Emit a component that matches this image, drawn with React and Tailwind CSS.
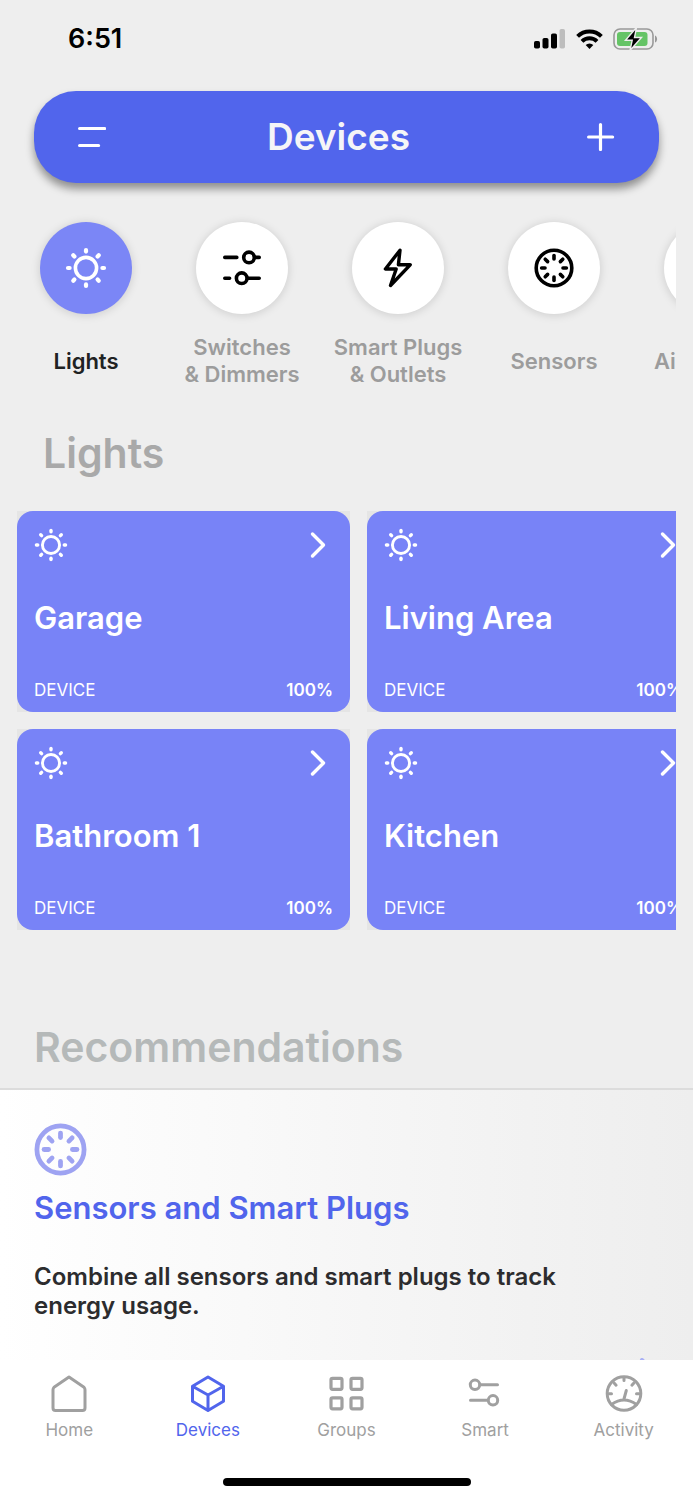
import clsx from "clsx";

const RAYS = [0, 45, 90, 135, 180, 225, 270, 315];

function SunIcon({ className }) {
  return (
    <svg viewBox="-1 -1 42 42" className={className} fill="none" stroke="currentColor" strokeLinecap="round" aria-hidden="true">
      <circle cx="20" cy="20" r="10.6" strokeWidth="3.6" />
      {RAYS.map((a) => (
        <path key={a} d="M20 2v1.6" strokeWidth="4.2" transform={`rotate(${a} 20 20)`} />
      ))}
    </svg>
  );
}

function SensorIcon({ className }) {
  return (
    <svg viewBox="0 0 40 40" className={className} fill="none" stroke="currentColor" strokeLinecap="round" aria-hidden="true">
      <circle cx="20" cy="20" r="17.8" strokeWidth="3.6" />
      {RAYS.map((a) => (
        <path key={a} d="M20 7.6v3.4" strokeWidth="3.6" transform={`rotate(${a} 20 20)`} />
      ))}
    </svg>
  );
}

function SwitchesIcon({ className }) {
  return (
    <svg viewBox="0 0 40 40" className={className} fill="none" stroke="currentColor" strokeWidth="3.6" strokeLinecap="round" aria-hidden="true">
      <path d="M2.8 9.4h12M33 9.4h4.2M2.8 30.200h4.800M26 30.200h11.200" />
      <circle cx="27" cy="9.400" r="5.300" />
      <circle cx="19.700" cy="30.200" r="5.300" />
    </svg>
  );
}

function BoltIcon({ className }) {
  return (
    <svg viewBox="0 0 40 40" className={className} fill="none" stroke="currentColor" strokeWidth="3.4" strokeLinejoin="round" aria-hidden="true">
      <path d="M22 2.200L7.400 21h10.800L12.500 37.500 32.200 16.800H20.400z" />
    </svg>
  );
}

function SmartIcon({ className }) {
  return (
    <svg viewBox="0 0 38 38" className={className} fill="none" stroke="currentColor" strokeWidth="3" strokeLinecap="round" aria-hidden="true">
      <path d="M14 10.8h17.5M4.500 26.300H21" />
      <circle cx="9" cy="10.800" r="4.700" />
      <circle cx="27" cy="26.300" r="4.700" />
    </svg>
  );
}

function HomeIcon({ className }) {
  return (
    <svg viewBox="0 0 38 38" className={className} fill="none" stroke="currentColor" strokeWidth="3" strokeLinejoin="round" aria-hidden="true">
      <path d="M19 3L34 13.2Q35 14.200 35 15.800V34a2.500 2.500 0 0 1-2.500 2.500h-27A2.500 2.500 0 0 1 3 34V15.800Q3 14.200 4 13.200z" />
    </svg>
  );
}

function CubeIcon({ className }) {
  return (
    <svg viewBox="0 0 38 38" className={className} fill="none" stroke="currentColor" strokeWidth="3" strokeLinejoin="round" aria-hidden="true">
      <path d="M19 3l15.5 9.200v15L19 36.500 3.500 27.200v-15zM3.500 12.200L19 21l15.500-8.800M19 21v15.500" />
    </svg>
  );
}

function GroupsIcon({ className }) {
  return (
    <svg viewBox="0 0 38 38" className={className} fill="none" stroke="currentColor" strokeWidth="3.2" aria-hidden="true">
      <rect x="4" y="4.3" width="11" height="11" rx="1.5" />
      <rect x="24" y="4.3" width="11" height="11" rx="1.5" />
      <rect x="4" y="23.800" width="11" height="11" rx="1.5" />
      <rect x="24" y="23.800" width="11" height="11" rx="1.5" />
    </svg>
  );
}

function ActivityIcon({ className }) {
  return (
    <svg viewBox="0 0 38 38" className={className} fill="none" stroke="currentColor" strokeWidth="3" strokeLinecap="round" aria-hidden="true">
      <circle cx="19" cy="19.500" r="16.800" />
      <path d="M6.500 30.500Q19 21.500 31.500 30.500M18.700 26L21.300 16.500M19 4v2.500M4 19.800h2.500M31.500 19.800H34M9.300 9.200l1.800 2M28.700 9.200l-1.800 2" />
    </svg>
  );
}

function StatusBar() {
  return (
    <div className="flex h-[91px] shrink-0 items-start justify-between pt-[21px] pr-[35px] pl-[68px]">
      <span className="text-[27px] leading-9 font-semibold text-black">6:51</span>
      <div className="flex h-9 items-center gap-[10px]">
        <svg viewBox="0 0 32 20" className="h-5 w-8" aria-hidden="true">
          <rect x="0" y="12" width="6" height="7.5" rx="1.8" />
          <rect x="8.5" y="9" width="6" height="10.5" rx="1.8" />
          <rect x="17" y="4.5" width="6" height="15" rx="1.8" />
          <rect x="25.5" y="0" width="5.5" height="19.5" rx="1.8" fill="#bdbdbd" />
        </svg>
        <svg viewBox="0 0 27 20" className="h-5 w-[27px]" fill="none" stroke="#000" strokeWidth="4" aria-hidden="true">
          <path d="M1.600 7.400a17 17 0 0 1 23.800 0" />
          <path d="M6 12.400a10.800 10.800 0 0 1 15 0" />
          <path d="M13.500 20l-3.800-4a5.400 5.400 0 0 1 7.600 0z" fill="#000" stroke="none" />
        </svg>
        <svg viewBox="0 0 45 24" className="h-6 w-[45px]" aria-hidden="true">
          <rect x="1" y="2" width="39" height="20" rx="6" fill="none" stroke="#999" strokeWidth="1.6" />
          <rect x="4" y="5" width="30.500" height="14" rx="3" fill="#65c466" />
          <path d="M42 8.500v7c2.800-1 2.800-6 0-7z" fill="#999" />
          <path d="M23.500 0.500L12.500 13.300h6.700L17 23.500 28.500 10.500h-7z" fill="#000" stroke="#eee" strokeWidth="1.400" />
        </svg>
      </div>
    </div>
  );
}

const CATEGORIES = [
  { lines: ["Lights"], icon: SunIcon, active: true },
  { lines: ["Switches", "& Dimmers"], icon: SwitchesIcon },
  { lines: ["Smart Plugs", "& Outlets"], icon: BoltIcon },
  { lines: ["Sensors"], icon: SensorIcon },
  { lines: ["Air Quality"], icon: SunIcon },
];

const DEVICES = ["Garage", "Living Area", "Bathroom 1", "Kitchen"];

const TABS = [
  { label: "Home", icon: HomeIcon },
  { label: "Devices", icon: CubeIcon, active: true },
  { label: "Groups", icon: GroupsIcon },
  { label: "Smart", icon: SmartIcon },
  { label: "Activity", icon: ActivityIcon },
];

function Category({ lines, icon: Icon, active }) {
  return (
    <button type="button" className="flex w-[156px] shrink-0 flex-col items-center gap-5">
      <span
        className={clsx(
          "flex size-[92px] items-center justify-center rounded-full shadow-[0_1px_10px_rgba(0,0,0,0.15)]",
          active ? "bg-[#7b86f6] text-white" : "bg-white text-black"
        )}
      >
        <Icon className={active ? "size-[42px]" : "size-10"} />
      </span>
      <span
        className={clsx(
          "flex h-[54px] flex-col justify-center text-[22px] leading-[27px] font-semibold whitespace-nowrap",
          active ? "text-[#1f2223]" : "text-[#9c9c9c]"
        )}
      >
        {lines.map((l) => (
          <span key={l}>{l}</span>
        ))}
      </span>
    </button>
  );
}

function DeviceCard({ name }) {
  return (
    <div className="bg-[#e5e5e5]">
      <button
        type="button"
        className="flex h-[201px] w-full flex-col rounded-2xl bg-[#7883f7] px-[17px] pt-[17px] text-left text-white"
      >
        <span className="flex w-full items-center justify-between">
          <SunIcon className="size-[34px]" />
          <svg viewBox="0 0 28 28" className="size-7" fill="none" stroke="currentColor" strokeWidth="3.4" strokeLinecap="round" strokeLinejoin="round" aria-hidden="true">
            <path d="M7.500 3L18.500 14 7.500 25" />
          </svg>
        </span>
        <span className="mt-9 text-[31px] leading-10 font-semibold">{name}</span>
        <span className="mt-10 flex w-full items-center justify-between text-[17px] leading-6">
          <span>DEVICE</span>
          <span className="font-semibold">100%</span>
        </span>
      </button>
    </div>
  );
}

export default function App() {
  return (
    <div className="flex h-screen flex-col overflow-hidden bg-[#eee] font-['Inter','Liberation_Sans',sans-serif]">
      <StatusBar />

      <header className="mx-[34px] flex h-[92px] shrink-0 items-center justify-between rounded-[42px] bg-[#5165ec] px-11 text-white shadow-[0_6px_8px_rgba(0,0,0,0.4)]">
        <button type="button" aria-label="Menu">
          <svg viewBox="0 0 28 28" className="size-7" fill="none" stroke="currentColor" strokeWidth="3.2" strokeLinecap="round">
            <path d="M1.6 5.5h25M1.6 22.5h19" />
          </svg>
        </button>
        <h1 className="text-[37px] leading-[46px] font-semibold text-[#f5f5f7]">Devices</h1>
        <button type="button" aria-label="Add device" className="pl-4">
          <svg viewBox="0 0 28 28" className="size-7" fill="none" stroke="currentColor" strokeWidth="3.2" strokeLinecap="round">
            <path d="M13.500 1.600v25M1.600 14h24" />
          </svg>
        </button>
      </header>

      <main className="flex min-h-0 flex-1 flex-col overflow-hidden">
        <nav className="mr-[17px] flex shrink-0 overflow-hidden pt-[39px] pl-2" aria-label="Categories">
          {CATEGORIES.map((c) => (
            <Category key={c.lines[0]} {...c} />
          ))}
        </nav>

        <section className="mt-10 mr-[17px] shrink-0 overflow-hidden pl-[17px]">
          <h2 className="pl-[26px] text-[41px] leading-[51px] font-semibold text-[#a9a9a9]">Lights</h2>
          <div className="mt-8 grid grid-cols-[333px_333px] gap-[17px]">
            {DEVICES.map((d) => (
              <DeviceCard key={d} name={d} />
            ))}
          </div>
        </section>

        <section className="mt-[92px] flex min-h-0 flex-1 flex-col">
          <h2 className="pb-[15px] pl-[34px] text-[41px] leading-[51px] font-semibold text-[#b5b9b9]">Recommendations</h2>
          <div className="flex-1 border-t-2 border-[#dcdcdc] bg-linear-to-r from-white to-[#eee] px-[34px] pt-[33px]">
            <SensorIcon className="size-[53px] text-[#9ea3f2]" />
            <h3 className="mt-3 text-[31px] leading-10 font-semibold text-[#5165ec]">Sensors and Smart Plugs</h3>
            <p className="mt-[34px] max-w-[560px] text-[24px] leading-[29px] font-semibold text-[#2c2c2e]">
              Combine all sensors and smart plugs to track energy usage.
            </p>
            <button type="button" aria-label="Open recommendation" className="mt-[38px] ml-auto block text-[#a9b0f5]">
              <svg viewBox="0 0 34 34" className="size-[34px]" fill="none" stroke="currentColor" strokeWidth="4" strokeLinecap="round" strokeLinejoin="round">
                <path d="M2 17h30M17 2l15 15-15 15" />
              </svg>
            </button>
          </div>
        </section>
      </main>

      <footer className="flex h-[140px] shrink-0 flex-col bg-white">
        <nav className="grid grid-cols-5 pt-[14px]" aria-label="Main">
          {TABS.map(({ label, icon: Icon, active }) => (
            <a
              key={label}
              href="#"
              className={clsx(
                "flex flex-col items-center gap-[6px] text-[17px] leading-6",
                active ? "text-[#5165ec]" : "text-[#a0a0a0]"
              )}
            >
              <Icon className="size-[38px]" />
              {label}
            </a>
          ))}
        </nav>
        <div className="mx-auto mt-auto mb-[14px] h-2 w-[248px] rounded-full bg-black" />
      </footer>
    </div>
  );
}
